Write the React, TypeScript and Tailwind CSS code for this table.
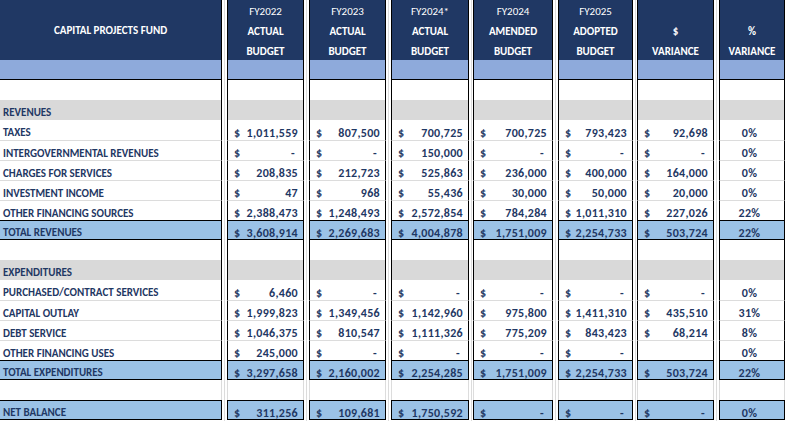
type RowKind = 'band' | 'blank' | 'section' | 'data' | 'total' | 'spacer' | 'net';

type Row = {
  kind: RowKind;
  label?: string;
  values?: string[];
  first?: boolean;
};

const headers = [
  ['FY2022', 'ACTUAL', 'BUDGET'],
  ['FY2023', 'ACTUAL', 'BUDGET'],
  ['FY2024*', 'ACTUAL', 'BUDGET'],
  ['FY2024', 'AMENDED', 'BUDGET'],
  ['FY2025', 'ADOPTED', 'BUDGET'],
  ['', '$', 'VARIANCE'],
  ['', '%', 'VARIANCE'],
];

// widths of the seven value columns and the gaps between all columns
const colWidths = ['w-[77px]', 'w-[77px]', 'w-[78px]', 'w-[80px]', 'w-[75px]', 'w-[77px]', 'w-[66px]'];
const gapWidths = ['w-[5px]', 'w-[5px]', 'w-[5px]', 'w-[4px]', 'w-[5px]', 'w-[4px]', 'w-[5px]'];

const rows: Row[] = [
  { kind: 'band' },
  { kind: 'blank' },
  { kind: 'section', label: 'REVENUES' },
  { kind: 'data', first: true, label: 'TAXES', values: ['1,011,559', '807,500', '700,725', '700,725', '793,423', '92,698', '0%'] },
  { kind: 'data', label: 'INTERGOVERNMENTAL REVENUES', values: ['-', '-', '150,000', '-', '-', '-', '0%'] },
  { kind: 'data', label: 'CHARGES FOR SERVICES', values: ['208,835', '212,723', '525,863', '236,000', '400,000', '164,000', '0%'] },
  { kind: 'data', label: 'INVESTMENT INCOME', values: ['47', '968', '55,436', '30,000', '50,000', '20,000', '0%'] },
  { kind: 'data', label: 'OTHER FINANCING SOURCES', values: ['2,388,473', '1,248,493', '2,572,854', '784,284', '1,011,310', '227,026', '22%'] },
  { kind: 'total', label: 'TOTAL REVENUES', values: ['3,608,914', '2,269,683', '4,004,878', '1,751,009', '2,254,733', '503,724', '22%'] },
  { kind: 'blank' },
  { kind: 'section', label: 'EXPENDITURES' },
  { kind: 'data', first: true, label: 'PURCHASED/CONTRACT SERVICES', values: ['6,460', '-', '-', '-', '-', '-', '0%'] },
  { kind: 'data', label: 'CAPITAL OUTLAY', values: ['1,999,823', '1,349,456', '1,142,960', '975,800', '1,411,310', '435,510', '31%'] },
  { kind: 'data', label: 'DEBT SERVICE', values: ['1,046,375', '810,547', '1,111,326', '775,209', '843,423', '68,214', '8%'] },
  { kind: 'data', label: 'OTHER FINANCING USES', values: ['245,000', '-', '-', '-', '-', '', '0%'] },
  { kind: 'total', label: 'TOTAL EXPENDITURES', values: ['3,297,658', '2,160,002', '2,254,285', '1,751,009', '2,254,733', '503,724', '22%'] },
  { kind: 'spacer' },
  { kind: 'net', label: 'NET BALANCE', values: ['311,256', '109,681', '1,750,592', '-', '-', '-', '0%'] },
];

function fillFor(row: Row) {
  switch (row.kind) {
    case 'band':
      return 'bg-[#8eaadb] border-b border-b-black';
    case 'section':
      return 'bg-[#d9d9d9]';
    case 'data':
      return row.first ? 'bg-white' : 'bg-white border-t border-t-[#dcdcdc]';
    case 'total':
    case 'net':
      return 'bg-[#9bc2e6] border-y border-y-black';
    default:
      return 'bg-white';
  }
}

function Gap({ width }: { width: string }) {
  return (
    <div className={`${width} flex shrink-0 justify-center bg-white`}>
      <div className="h-full w-px bg-[#dcdcdc]" />
    </div>
  );
}

function LabelColumn() {
  return (
    <div className="flex w-[222px] shrink-0 flex-col">
      <div className="flex h-[60px] items-center justify-center border-r border-r-black bg-[#203864] pt-[1px] font-bold text-white">
        CAPITAL PROJECTS FUND
      </div>
      {rows.map((row, i) => (
        <div
          key={i}
          className={`flex h-[20px] items-center border-r pl-[3px] pt-[5px] font-bold ${
            row.kind === 'spacer' ? 'border-r-[#dcdcdc]' : 'border-r-black'
          } ${fillFor(row)}`}
        >
          {row.label}
        </div>
      ))}
    </div>
  );
}

function ValueColumn({ index, width }: { index: number; width: string }) {
  const isPct = index === 6;
  return (
    <div className={`flex ${width} shrink-0 flex-col`}>
      {headers[index].map((line, j) => (
        <div
          key={j}
          className={`flex h-[20px] items-center justify-center border-x border-x-black bg-[#203864] pt-[2px] text-white ${
            j === 0 ? 'font-normal' : 'font-bold'
          }`}
        >
          {line}
        </div>
      ))}
      {rows.map((row, i) => {
        const value = row.values?.[index] ?? '';
        const side = row.kind === 'spacer' ? 'border-x-[#dcdcdc]' : 'border-x-black';
        return (
          <div
            key={i}
            className={`flex h-[20px] items-center border-x pt-[5px] text-[12px] font-bold tracking-[0.3px] ${side} ${fillFor(row)} ${
              isPct ? 'justify-center' : 'justify-between pl-[6px]'
            } ${value === '-' ? 'pr-[8px]' : 'pr-[5px]'}`}
          >
            {isPct ? (
              value
            ) : value ? (
              <>
                <span>$</span>
                <span>{value}</span>
              </>
            ) : null}
          </div>
        );
      })}
    </div>
  );
}

export default function App() {
  return (
    <div className="flex h-[421px] w-[786px] overflow-hidden bg-white font-[family-name:'Liberation_Sans_Narrow',Carlito,Lato,sans-serif] text-[11px] leading-none text-[#1f3864]">
      <LabelColumn />
      {colWidths.map((w, i) => (
        <div key={i} className="flex shrink-0">
          <Gap width={gapWidths[i]} />
          <ValueColumn index={i} width={w} />
        </div>
      ))}
    </div>
  );
}
